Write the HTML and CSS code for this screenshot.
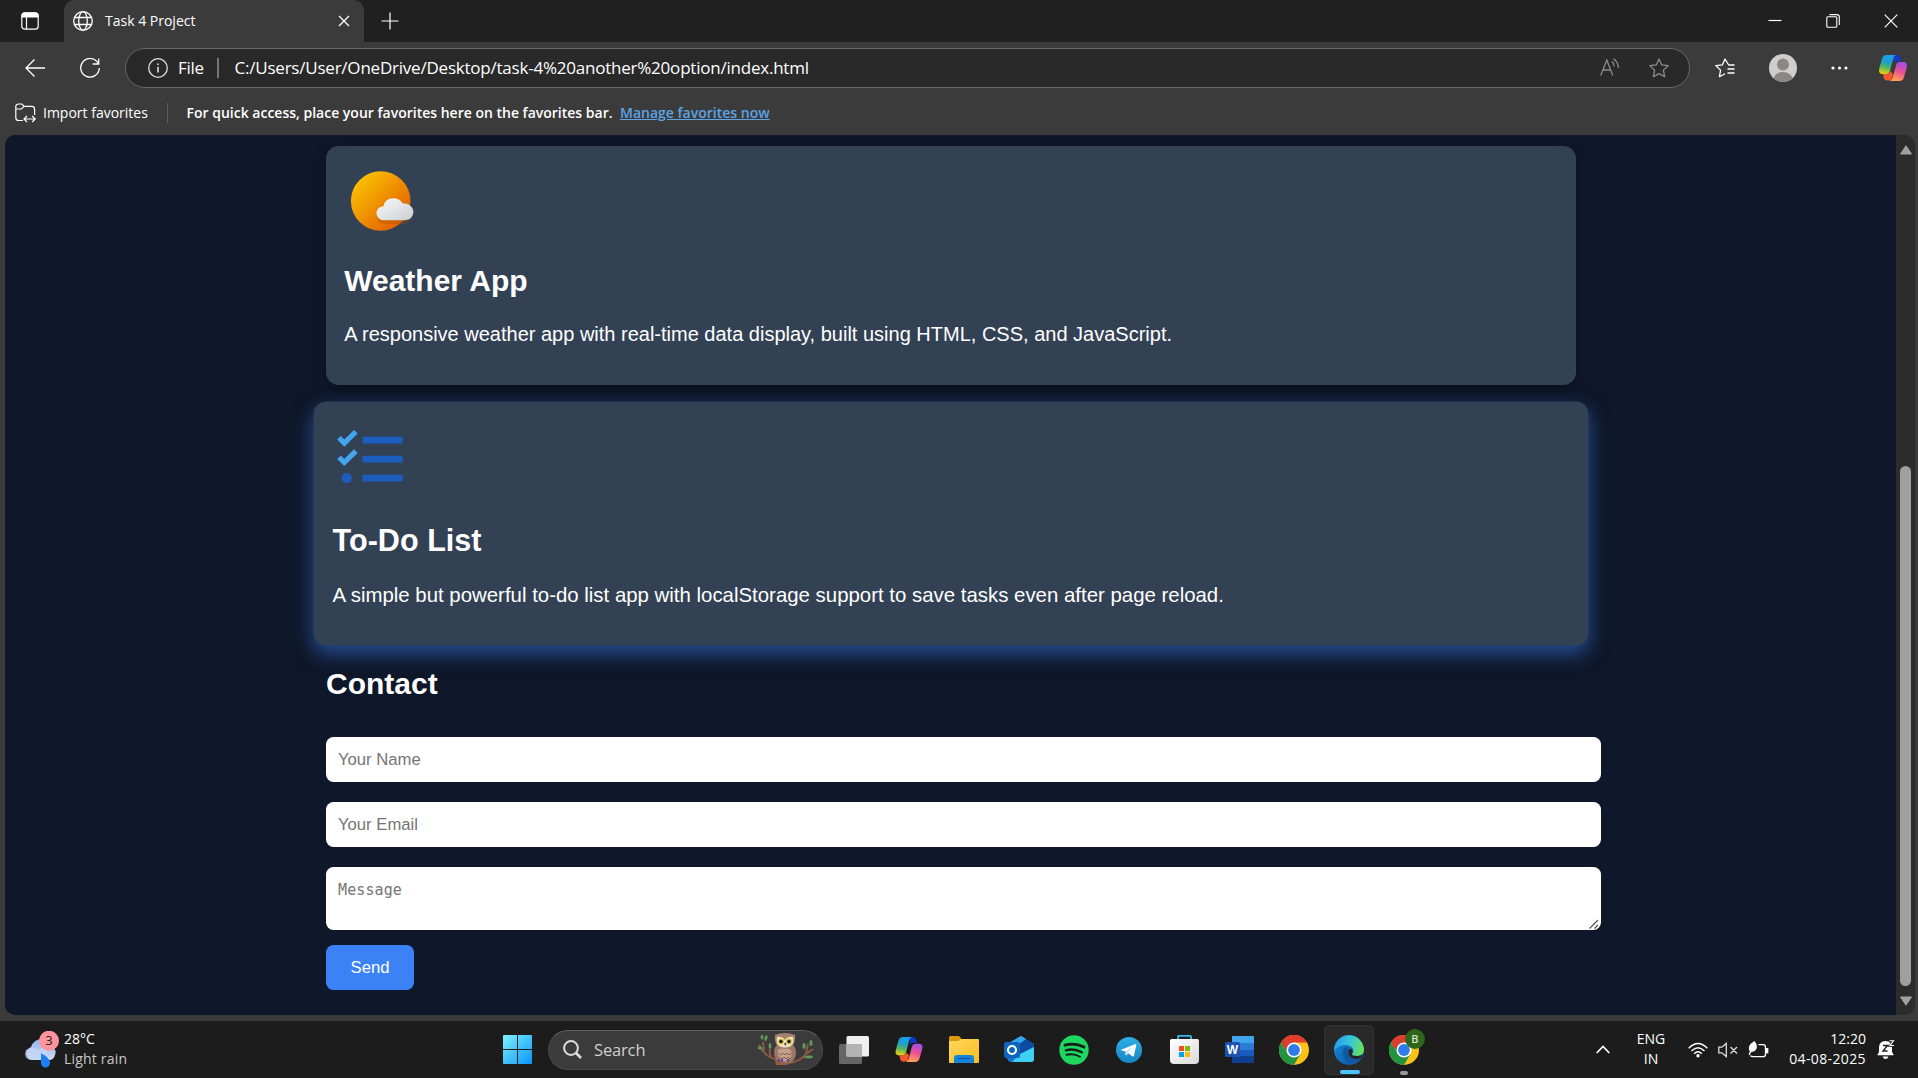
FILE: index.html
```html
<!DOCTYPE html>
<html lang="en">
<head>
<meta charset="utf-8">
<title>Task 4 Project</title>
<link rel="stylesheet" href="styles.css">
</head>
<body>
<svg class="defs" width="0" height="0">
  <defs>
    <linearGradient id="cpA" x1="0.4" y1="0" x2="0.2" y2="1"><stop offset="0" stop-color="#1b9df0"/><stop offset=".35" stop-color="#1aa0c8"/><stop offset=".65" stop-color="#5cb85c"/><stop offset="1" stop-color="#f7d308"/></linearGradient>
    <linearGradient id="cpB" x1="0.7" y1="0" x2="0.4" y2="1"><stop offset="0" stop-color="#a04df0"/><stop offset=".5" stop-color="#ee5090"/><stop offset="1" stop-color="#ffa254"/></linearGradient>
    <linearGradient id="sun" x1="0" y1="0" x2="1" y2="1"><stop offset=".1" stop-color="#fdc500"/><stop offset=".9" stop-color="#e05a00"/></linearGradient>
    <linearGradient id="cloud" x1="0" y1="0" x2="1" y2="1"><stop offset="0" stop-color="#fafafa"/><stop offset="1" stop-color="#c9ced1"/></linearGradient>
    <linearGradient id="win" x1="0" y1="0" x2="1" y2="1"><stop offset="0" stop-color="#7df3ff"/><stop offset="1" stop-color="#0a94f8"/></linearGradient>
    <linearGradient id="fold" x1="0" y1="0" x2="1" y2="1"><stop offset="0" stop-color="#ffd75e"/><stop offset="1" stop-color="#fbbd1e"/></linearGradient>
    <linearGradient id="rain" x1="0" y1="0" x2="0" y2="1"><stop offset="0" stop-color="#8fb4ee"/><stop offset="1" stop-color="#cfdcf3"/></linearGradient>
    <linearGradient id="tg" x1="0" y1="0" x2="0" y2="1"><stop offset="0" stop-color="#2faee6"/><stop offset="1" stop-color="#1587c4"/></linearGradient>
    <linearGradient id="bag" x1="0" y1="0" x2="1" y2="1"><stop offset="0" stop-color="#fff"/><stop offset="1" stop-color="#d9d9d9"/></linearGradient>
    <linearGradient id="edgeTop" x1="0" y1=".4" x2="1" y2=".6"><stop offset="0" stop-color="#2a9fe6"/><stop offset=".5" stop-color="#35c6dc"/><stop offset="1" stop-color="#6ee04f"/></linearGradient>
    <linearGradient id="edgeLow" x1="0" y1="0" x2="1" y2="1"><stop offset="0" stop-color="#1a8fe0"/><stop offset="1" stop-color="#0c4b96"/></linearGradient>
    <symbol id="copilot" viewBox="0 0 28 26">
      <path d="M15 0h3c2 0 3 1.200 3.500 3l.8 3h-3.300c-2 0-3 .8-3.500 2.500z" fill="#1238c8"/>
      <path d="M7 25.500c-1.500-.5-2-2-2.500-4L4 19h3.500c2 0 3-1 3.500-3l3 3-1.500 6.500z" fill="#f0572d"/>
      <path d="M7.500 0H17c-1.600.6-2.300 2-2.900 4.200L11 15.500c-.6 2.300-1.600 3.500-4 3.500H3.500C.3 19-.4 16.500.3 13.500L3 3.800C3.800 1.200 5.200 0 7.500 0z" fill="url(#cpA)"/>
      <path d="M20.500 26H11c1.600-.6 2.300-2 2.900-4.200L17 10.500C17.600 8.200 18.600 7 21 7h3.500c3.200 0 3.900 2.500 3.200 5.500L25 22.200c-.8 2.600-2.200 3.800-4.500 3.800z" fill="url(#cpB)"/>
    </symbol>
    <symbol id="chrome" viewBox="0 0 30 30">
      <circle cx="15" cy="15" r="15" fill="#fbc116"/>
      <path d="M15 15L2 7.500A15 15 0 0 1 28 7.500H15z" fill="#e33b2e"/>
      <path d="M2 7.500A15 15 0 0 0 15 30L21.500 18.700 15 15 8.500 18.700z" fill="#229342"/>
      <path d="M2 7.500h13L8.500 18.700z" fill="#229342"/><path d="M2 7.500h26H14L9 11.500 6 14z" fill="#e33b2e"/>
      <circle cx="15" cy="15" r="7.500" fill="#fff"/><circle cx="15" cy="15" r="5.900" fill="#2f7bea"/>
    </symbol>
  </defs>
</svg>
<div class="window">
  <header class="tabs">
    <svg class="workspaces" width="18" height="18" viewBox="0 0 18 18" fill="none" stroke="#fff" stroke-width="1.200"><rect x=".8" y=".8" width="16.400" height="16.400" rx="3"/><path d="M1 5V3.500Q1 1 3.500 1h11Q17 1 17 3.500V5z" fill="#fff"/><path d="M5.500 5v12"/></svg>
    <div class="tab">
      <svg width="20" height="20" viewBox="0 0 20 20" fill="none" stroke="#fff" stroke-width="1.300"><circle cx="10" cy="10" r="9.300"/><ellipse cx="10" cy="10" rx="4.300" ry="9.300"/><path d="M1.500 6.500h17M1.500 13.500h17"/></svg>
      <span class="ui tab-title">Task 4 Project</span>
      <svg width="12" height="12" viewBox="0 0 12 12" stroke="#fff" stroke-width="1.300"><path d="M1 1l10 10M11 1L1 11"/></svg>
    </div>
    <svg class="plus" width="18" height="18" viewBox="0 0 18 18" stroke="#fff" stroke-width="1.200"><path d="M9 .5v17M.5 9h17"/></svg>
    <div class="controls">
      <svg width="14" height="14" viewBox="0 0 14 14" stroke="#fff" stroke-width="1.200"><path d="M.5 6.500h13"/></svg>
      <svg width="14" height="14" viewBox="0 0 14 14" fill="none" stroke="#fff" stroke-width="1.100"><rect x=".8" y="2.800" width="10" height="10.400" rx="1"/><path d="M3.500.6h7.300q2.500 0 2.500 2.400v8"/></svg>
      <svg width="14" height="14" viewBox="0 0 14 14" stroke="#fff" stroke-width="1.200"><path d="M.7.700l12.600 12.600M13.300.7L.7 13.300"/></svg>
    </div>
  </header>
  <div class="toolbar">
    <svg class="back" width="20" height="20" viewBox="0 0 20 20" fill="none" stroke="#fff" stroke-width="1.300"><path d="M20 10H1M9.500 1.500L1 10l8.500 8.500"/></svg>
    <svg class="reload" width="20" height="20" viewBox="0 0 20 20" fill="none" stroke="#fff" stroke-width="1.300"><path d="M18.500 6A9.300 9.300 0 1 0 19.300 10M18.700.5V6h-6"/></svg>
    <div class="address">
      <svg width="20" height="20" viewBox="0 0 20 20" fill="none" stroke="#ddd" stroke-width="1.300"><circle cx="10" cy="10" r="9.300"/><path d="M10 8.800v5.700M10 5.500v1.600" stroke-width="1.600"/></svg>
      <span class="ui file">File</span><i class="bar"></i><span class="ui url">C:/Users/User/OneDrive/Desktop/task-4%20another%20option/index.html</span>
      <svg class="read" width="20" height="20" viewBox="0 0 20 20" fill="none" stroke="#8c8c8c" stroke-width="1.300"><path d="M.7 17.500L6.800 2l6 15.500M3 12h7.700M12 3.500q2 1.500 2.200 5M13.500.8q4.600 3.200 5 9.200"/></svg>
      <svg class="star" width="20" height="20" viewBox="0 0 20 20" fill="none" stroke="#8c8c8c" stroke-width="1.300" stroke-linejoin="round"><path d="M10 1l2.700 5.900 6.400.8-4.700 4.400 1.200 6.600L10 15.600l-5.600 3.100 1.200-6.600L.9 7.700l6.400-.8z"/></svg>
    </div>
    <svg class="favs" width="20" height="20" viewBox="0 0 20 20" fill="none" stroke="#fff" stroke-width="1.300" stroke-linejoin="round"><path d="M19.500 7h-5.800L10 1 7.300 6.900.9 7.700l4.700 4.400-1.200 6.600 5.600-3M12.500 11h7M12.500 15h7"/></svg>
    <svg class="avatar" width="28" height="28" viewBox="0 0 28 28"><defs><clipPath id="av"><circle cx="14" cy="14" r="14"/></clipPath></defs><g clip-path="url(#av)"><rect width="28" height="28" fill="#d0cecb"/><circle cx="14" cy="10.500" r="6" fill="#8b8784"/><ellipse cx="14" cy="25.500" rx="9.500" ry="7.500" fill="#8b8784"/></g></svg>
    <svg class="dots" width="17" height="4" viewBox="0 0 17 4" fill="#fff"><circle cx="2" cy="2" r="1.600"/><circle cx="8.500" cy="2" r="1.600"/><circle cx="15" cy="2" r="1.600"/></svg>
    <svg class="cp" width="28" height="26"><use href="#copilot"/></svg>
  </div>
  <div class="favbar">
    <svg width="21" height="20" viewBox="0 0 21 20" fill="none" stroke="#fff" stroke-width="1.200"><path d="M8 17.500H3.500Q.8 17.500.8 14.800V3.500Q.8 1 3.500 1h3.300L9.300 3.400h7.500q2.800 0 2.800 2.800V12M1 6h5.300l3-2.600M9.500 16h10M12 13l-3 3 3 3M17.200 13l3 3-3 3"/></svg>
    <span class="ui import">Import favorites</span><i class="bar"></i><span class="ui hint">For quick access, place your favorites here on the favorites bar.</span><a class="ui manage">Manage favorites now</a>
  </div>
  <div class="viewport">
    <main class="page">
      <section class="card">
        <svg class="pic" width="75" height="75" viewBox="0 0 75 75"><circle cx="36.700" cy="36" r="29.800" fill="url(#sun)"/><path d="M40 59a6 6 0 0 1 0-14q1-8 9.500-8.500 7 0 9.500 5.500a9 8.500 0 0 1 1 17z" fill="#a84a00" opacity=".3"/><path d="M39.500 55.200a7 7 0 0 1 0-14q1-7.700 10-8 6 0 9 5 9 0 11 8-.5 8.500-8.500 9z" fill="url(#cloud)"/></svg>
        <h2>Weather App</h2>
        <p>A responsive weather app with real-time data display, built using HTML, CSS, and JavaScript.</p>
      </section>
      <section class="card raised">
        <svg class="pic" width="75" height="75" viewBox="0 0 75 75"><g fill="none" stroke="#42a5ee" stroke-width="5"><path d="M6 16.500l5.200 5.200L22.500 10.500M6 35.500l5.200 5.200L22.500 29.500"/></g><g fill="#1c5dbf"><rect x="29" y="15.500" width="39.500" height="6.500" rx="1"/><rect x="29" y="34.100" width="39.500" height="6.500" rx="1"/><rect x="29" y="52.800" width="39.500" height="6.500" rx="1"/><circle cx="13.500" cy="56" r="5"/></g></svg>
        <h2>To-Do List</h2>
        <p>A simple but powerful to-do list app with localStorage support to save tasks even after page reload.</p>
      </section>
      <h2 class="heading">Contact</h2>
      <form class="contact">
        <div class="field"><span>Your Name</span></div>
        <div class="field"><span>Your Email</span></div>
        <div class="field message"><span>Message</span>
          <svg class="grip" width="10" height="10" viewBox="0 0 10 10" stroke="#555" stroke-width="1.200"><path d="M.5 9.500L9 1M5.500 9.500L9 6"/></svg></div>
        <div class="send"><span>Send</span></div>
      </form>
    </main>
    <div class="scroll">
      <svg width="12" height="10" viewBox="0 0 12 10" fill="#a0a0a0" stroke="#a0a0a0" stroke-linejoin="round"><path d="M6 .8L11.500 9H.5z"/></svg>
      <i class="thumb"></i>
      <svg width="12" height="10" viewBox="0 0 12 10" fill="#a0a0a0" stroke="#a0a0a0" stroke-linejoin="round"><path d="M6 9.200L11.500 1H.5z"/></svg>
    </div>
  </div>
</div>
<footer class="taskbar">
  <div class="weather">
    <svg width="36" height="38" viewBox="0 0 36 38"><path d="M8 29a7.500 7 0 0 1-1-13q3-8 11-8 9 0 11 9 4 2 2 7-1 5-6 5z" fill="url(#rain)"/><path d="M2 19q6-4 12 0 4-3 9-1v11H8q-6 0-7-6z" fill="#c4d6f4" opacity=".8"/><path d="M17 22q9 5 9 10a4.500 4.500 0 0 1-9 0z" fill="#1f7ff5"/><circle cx="25" cy="9.700" r="10" fill="#ff949d"/><text x="25" y="14.400" text-anchor="middle" class="badge">3</text></svg>
    <div class="ui two"><span class="temp">28°C</span><span class="dim">Light rain</span></div>
  </div>
  <svg class="start" width="29" height="29" viewBox="0 0 29 29" fill="url(#win)"><path d="M1 0h13v14H0V1q0-1 1-1zM15 0h13q1 0 1 1v13H15zM0 15h14v14H1q-1 0-1-1zM15 15h14v13q0 1-1 1H15z"/></svg>
  <div class="search">
    <svg width="19" height="19" viewBox="0 0 19 19" fill="none" stroke="#ddd" stroke-width="2"><circle cx="8" cy="8" r="6.900"/><path d="M13 13l5 5" stroke-width="2.600"/></svg>
    <span class="ui">Search</span>
    <svg class="owl" width="56" height="33" viewBox="0 0 56 33">
      <path d="M1 12q5 11 16 14l5 4h8q12-1 18-9l7-5M6 18L5 9M48 20l2-9M13 24q-2-5-1-8M44 24h9" stroke="#8c5a44" stroke-width="2" fill="none"/><path d="M17 27q8 3 20-1l-8 6H18z" fill="#9a5b3c"/>
      <path d="M16 19q0-9 11-9t11 9-7 11h-7q-8-2-8-11z" fill="#9a7668"/><path d="M20 17q7-4 13 0 2 6-3 11h-6q-5-5-4-11z" fill="#c2a08d"/><path d="M21 20l2 2 2-2 2 2 2-2 2 2 2-2M22 24l2 2 2-2 2 2 2-2 2 2" stroke="#85604f" fill="none"/>
      <path d="M17 2q10-4 20 0 1 14-10 14T17 2z" fill="#a68170"/><path d="M19 4q5-1 8 3 3-4 8-3 2 10-8 10.500Q17 14 19 4z" fill="#f2e2bd"/><circle cx="23" cy="8.500" r="2.900" fill="#d7c62f"/><circle cx="31" cy="8.500" r="2.900" fill="#d7c62f"/><circle cx="23" cy="8.500" r="1.700" fill="#181818"/><circle cx="31" cy="8.500" r="1.700" fill="#181818"/><path d="M26 10h2.500L27.200 13.500z" fill="#4a4a50"/>
      <g fill="#5f9a57"><ellipse cx="4" cy="4" rx="1.400" ry="2.600"/><ellipse cx="8" cy="5" rx="1.400" ry="3" transform="rotate(20 8 5)"/><ellipse cx="12" cy="13" rx="1.400" ry="3"/><ellipse cx="2" cy="15" rx="2.600" ry="1.200"/><ellipse cx="46" cy="13" rx="1.500" ry="3"/><ellipse cx="53" cy="10" rx="1.500" ry="3"/><ellipse cx="51" cy="24" rx="4" ry="1.400"/></g><path d="M21 26v3M24 26v3M30 26v3" stroke="#53409a" stroke-width="1.800"/>
    </svg>
  </div>
  <nav class="apps">
    <span class="app"><svg width="30" height="28" viewBox="0 0 30 28"><rect y="8" width="23" height="20" rx="1.500" fill="#666"/><rect x="7.500" width="22.500" height="20.500" rx="1.500" fill="#efefef"/><path d="M7.500 8H23v12.500H7.500z" fill="#b3b3b3"/></svg></span>
    <span class="app"><svg width="28" height="25"><use href="#copilot"/></svg></span>
    <span class="app"><svg width="30" height="27" viewBox="0 0 30 27"><path d="M0 1.500Q0 0 1.500 0h8.500l2.500 3H29v10H0z" fill="#dc9a0b"/><path d="M0 6q0-1 1-1h8.500L12 3h17q1 0 1 1v22q0 1-1 1H1q-1 0-1-1z" fill="url(#fold)"/><path d="M5 27v-5q0-3 3-3h14q3 0 3 3v5z" fill="#1585dc"/><path d="M9 22.500h12" stroke="#0b58a6" stroke-width="1.300"/></svg></span>
    <span class="app"><svg width="30" height="27" viewBox="0 0 30 27"><path d="M3 8L17 0l13 8v15q0 3-3 3H8q-5 0-5-5z" fill="#1674cf"/><path d="M3 8L17 0l5 3L9 13z" fill="#35a8ea"/><path d="M22 3l8 5v3L16 19l-7-6z" fill="#0c4da2"/><path d="M30 11v12q0 3-3 3H8l8-8z" fill="#3fd0f4"/><rect y="6" width="16" height="16" rx="2" fill="#0f64bd"/><circle cx="8" cy="14" r="4" fill="none" stroke="#fff" stroke-width="2.100"/></svg></span>
    <span class="app"><svg width="30" height="30" viewBox="0 0 30 30"><circle cx="15" cy="15" r="14.700" fill="#1ed760"/><g fill="none" stroke="#151f18" stroke-linecap="round"><path d="M6 10.200q10-2.800 19 1.800" stroke-width="2.900"/><path d="M6.800 15.300q8.500-2.300 16 2" stroke-width="2.400"/><path d="M7.500 19.800q7.500-1.600 13.500 1.900" stroke-width="1.900"/></g></svg></span>
    <span class="app"><svg width="26" height="26" viewBox="0 0 26 26"><circle cx="13" cy="13" r="13" fill="url(#tg)"/><path d="M4.500 13L19.500 7q1-.3.800 1L18 18.500q-.4 1.500-1.700.7l-4-3-2 2q-.7.500-.8-.4V14.500z" fill="#fff"/><path d="M9.500 14.800l7.500-5-5.500 6-1.300 2.300z" fill="#b9d9ec"/></svg></span>
    <span class="app"><svg width="29" height="29" viewBox="0 0 29 29"><path d="M8 6V1.800Q8 .8 9 .8h11q1 0 1 1V6" fill="none" stroke="#35b7e8" stroke-width="1.800"/><path d="M0 5.500Q0 4 1.500 4h26Q29 4 29 5.500V25q0 4-4 4H4q-4 0-4-4z" fill="url(#bag)"/><path d="M9 11h5v5H9z" fill="#f25022"/><path d="M15 11h5v5h-5z" fill="#7fba00"/><path d="M9 17h5v5H9z" fill="#00a4ef"/><path d="M15 17h5v5h-5z" fill="#ffb900"/></svg></span>
    <span class="app"><svg width="29" height="27" viewBox="0 0 29 27"><path d="M7 1q0-1 1-1h20q1 0 1 1v6H7z" fill="#41a5ee"/><path d="M7 7h22v7H7z" fill="#2b7cd3"/><path d="M7 14h22v6.500H7z" fill="#185abd"/><path d="M7 20.500h22V26q0 1-1 1H8q-1 0-1-1z" fill="#103f91"/><rect y="6" width="15" height="15" rx="1.500" fill="#1b54b0"/><text x="7.500" y="18" text-anchor="middle" class="word">W</text></svg></span>
    <span class="app"><svg width="30" height="30"><use href="#chrome"/></svg></span>
    <span class="app active"><svg width="30" height="30" viewBox="0 0 30 30"><circle cx="15" cy="15" r="15" fill="url(#edgeLow)"/><path d="M.2 13A15 15 0 0 1 30 14.500q0 6.500-7 6.500-5 0-5-2 2-2 1-5-2-4-8-4Q4 10 .2 16z" fill="url(#edgeTop)"/><path d="M11 12q-3 3-2 8 2 6 8 9.500 7-.5 11-7-6 3-11 0-4-3-3-8 .3-2.500-3-2.500z" fill="#0f5aa6"/><path d="M18 14.500q1.500 2-.3 4.300-.5 2.200 5.300 2.200 3.500 0 5-1.200l-.5 3q-6 2.500-10.500-.3-3.500-3-2.500-7.500 1.500-1.500 3.500-.5z" fill="#262626"/></svg><i class="ind"></i></span>
    <span class="app"><svg width="30" height="30"><use href="#chrome"/></svg><b class="ui who">B</b><i class="ind small"></i></span>
  </nav>
  <div class="tray">
    <svg class="chev" width="14" height="9" viewBox="0 0 14 9" fill="none" stroke="#fff" stroke-width="1.700"><path d="M.7 8L7 1.500 13.300 8"/></svg>
    <div class="ui two lang"><span>ENG</span><span>IN</span></div>
    <svg class="wifi" width="20" height="16" viewBox="0 0 20 16" fill="none" stroke="#fff" stroke-width="1.400"><path d="M.7 6.200q9.300-9.500 18.600 0M3.500 9q6.500-6.500 13 0M6.200 11.700q3.800-3.800 7.600 0"/><circle cx="10" cy="13.800" r="1.700" fill="#fff" stroke="none"/></svg>
    <svg class="mute" width="20" height="16" viewBox="0 0 20 16" fill="none" stroke="#ddd" stroke-width="1.300"><path d="M.8 5.200h3L8.300 1.500v13L3.800 10.800h-3zM12.500 5l6.500 6.500M19 5l-6.500 6.500"/></svg>
    <svg class="batt" width="21" height="18" viewBox="0 0 21 18" fill="none" stroke="#fff" stroke-width="1.300"><path d="M10.500 3.700h4.500q2.500 0 2.500 2.500v7q0 2.500-2.500 2.500H5q-1.800 0-2.500-1"/><path d="M18.500 7.700h1.200v4h-1.200z" fill="#fff"/><path d="M6.500 0q3.500 4 1.800 8Q7 11.300 3.500 10.800L1.500 14.200.5 13.600 1.800 10.500Q-1.500 4.500 6.500 0z" fill="#fff" stroke="none"/></svg>
    <div class="ui two clock"><span>12:20</span><span class="date">04-08-2025</span></div>
    <svg class="bell" width="18" height="20" viewBox="0 0 18 20" fill="#fff"><path d="M2 8q0-7 6.500-7Q15 1 15 8v4l1.500 2.500v.8H.5v-.8L2 12zM5.500 16.500h6q-1 2.500-3 2.500t-3-2.500z"/><path d="M6 5.500h4.500L6 11h4.500M12 1.500h4L12 6h4" stroke="#1c1c1c" stroke-width="1.400" fill="none"/><path d="M12.500.8h4L13 5.500h4" stroke="#fff" stroke-width="1.100" fill="none"/></svg>
  </div>
</footer>
</body>
</html>
```
FILE: styles.css
```css
* { box-sizing: border-box; }
body { margin: 0; width: 1918px; height: 1078px; overflow: hidden; background: #3b3b3b; color: #fff; display: flex; flex-direction: column; font-family: "Liberation Sans", Arial, sans-serif; }
svg { display: block; flex: none; }
i { flex: none; display: block; }
.defs { position: absolute; }
.ui { font-family: "Open Sans", "Noto Sans", sans-serif; white-space: nowrap; }
.window { height: 1021px; display: flex; flex-direction: column; }

/* tab strip */
.tabs { height: 42px; background: #202020; display: flex; align-items: center; }
.workspaces { margin-left: 21px; }
.tab { margin-left: 25px; width: 300px; height: 42px; background: #3b3b3b; border-radius: 10px 10px 0 0; display: flex; align-items: center; padding: 0 14px 0 9px; }
.tab-title { margin-left: 12px; flex: 1; font-size: 14px; padding-bottom: 2px; }
.plus { margin-left: 17px; }
.controls { margin-left: auto; display: flex; gap: 44px; padding-right: 20px; }

/* toolbar */
.toolbar { height: 52px; display: flex; align-items: center; }
.back { margin-left: 25px; }
.reload { margin-left: 35px; }
.address { margin-left: 25px; width: 1565px; height: 40px; border: 1px solid #666; border-radius: 20px; background: #292929; display: flex; align-items: center; padding: 0 20px 0 22px; }
.file { margin-left: 10px; width: 39px; font-size: 17px; letter-spacing: -.3px; padding-bottom: 2px; }
.address .bar { width: 1.5px; height: 20px; background: #777; }
.url { margin-left: 16px; font-size: 17px; letter-spacing: -.22px; padding-bottom: 2px; }
.read { margin-left: auto; }
.star { margin-left: 29px; }
.favs { margin-left: 25px; }
.avatar { margin-left: 34px; }
.dots { margin-left: 34px; }
.cp { margin-left: 31px; }

/* favorites bar */
.favbar { height: 41px; padding: 0 0 4px 15px; display: flex; align-items: center; font-size: 14px; }
.import { margin-left: 7px; width: 124px; }
.favbar .bar { width: 1px; height: 20px; background: #5c5c5c; }
.hint { margin-left: 18.500px; font-weight: 600; }
.manage { margin-left: 7.500px; font-weight: 600; color: #5ca4e6; text-decoration: underline; }

/* viewport */
.viewport { margin: 0 3px 0 5px; height: 880px; display: flex; border-radius: 10px; overflow: hidden; }
.page { flex: 1; background: #0f172a; padding: 11px 0 0 321px; }
.card { width: 1250px; height: 239.300px; margin-bottom: 18.700px; padding: 18.700px 18.200px; border-radius: 12.500px; background: #334155; box-shadow: 0 5px 12.500px rgba(0, 0, 0, .3); }
.raised { transform: scale(1.02); padding-left: 18.700px; box-shadow: 0 7.500px 18.750px rgba(59, 130, 246, .5); }
h2 { margin: 24px 0 25px; font-size: 30px; line-height: 34px; }
.raised h2 { margin-top: 25px; }
p { margin: 0; font-size: 20px; line-height: 23px; }
.contact { width: 1275px; margin-top: 36px; }
.field { height: 45px; margin-bottom: 20px; padding: 0 12px; border-radius: 7.500px; background: #fff; color: #757575; font-size: 16.670px; display: flex; align-items: center; }
.message { position: relative; height: 63px; margin-bottom: 15px; align-items: flex-start; padding-top: 14px; font-family: "DejaVu Sans Mono", monospace; font-size: 15px; letter-spacing: .1px; }
.grip { position: absolute; right: 2px; bottom: 1px; }
.send { width: 88px; height: 45px; border-radius: 7.500px; background: #3b82f6; font-size: 16.670px; display: flex; align-items: center; justify-content: center; }

/* scrollbar */
.scroll { width: 19px; background: #2c2c2c; display: flex; flex-direction: column; align-items: center; padding: 10px 0 9px; }
.thumb { width: 11px; height: 520px; margin: auto 0 10px; border-radius: 6px; background: #9f9f9f; }

/* taskbar */
.taskbar { height: 57px; background: #1c1c1c; display: flex; align-items: center; }
.two { display: flex; flex-direction: column; font-size: 14px; line-height: 20px; padding-bottom: 1px; }
.weather { width: 503px; padding-left: 24px; display: flex; align-items: center; }
.weather .two { margin-left: 4px; }
.dim { color: #c8c8c8; letter-spacing: .2px; }
.badge { font: 13px "Open Sans", sans-serif; fill: #222; }
.search { margin-left: 16px; width: 275px; height: 40px; border-radius: 20px; background: #3b3b3b; border: 1px solid #4a4a4a; border-top-color: #606060; display: flex; align-items: center; padding: 0 8px 0 14px; color: #d0d0d0; font-size: 16.500px; }
.search .ui { margin-left: 12px; letter-spacing: -.15px; }
.owl { margin-left: auto; }
.apps { margin-left: 6px; display: flex; gap: 5px; }
.app { position: relative; width: 50px; height: 50px; border-radius: 5px; display: flex; align-items: center; justify-content: center; }
.active { background: #292929; border: 1px solid #333; }
.ind { position: absolute; bottom: 0; left: 15px; width: 20px; height: 4px; border-radius: 2px; background: #4cc2ff; }
.small { left: 21px; width: 8px; background: #9a9a9a; }
.who { position: absolute; left: 26px; top: 4px; width: 20px; height: 20px; border-radius: 50%; background: #2d661b; font-size: 11px; line-height: 20px; font-weight: 600; text-align: center; color: #cfe0c8; }
.word { font: bold 12px "Liberation Sans", sans-serif; fill: #fff; }
.tray { margin-left: auto; display: flex; align-items: center; padding-right: 23px; }
.lang { width: 40px; margin-left: 21px; align-items: center; }
.wifi { margin-left: 17px; }
.mute { margin-left: 10px; }
.batt { margin-left: 10px; }
.clock { width: 97px; align-items: flex-end; }
.date { letter-spacing: .38px; }
.bell { margin-left: 11px; }
```
